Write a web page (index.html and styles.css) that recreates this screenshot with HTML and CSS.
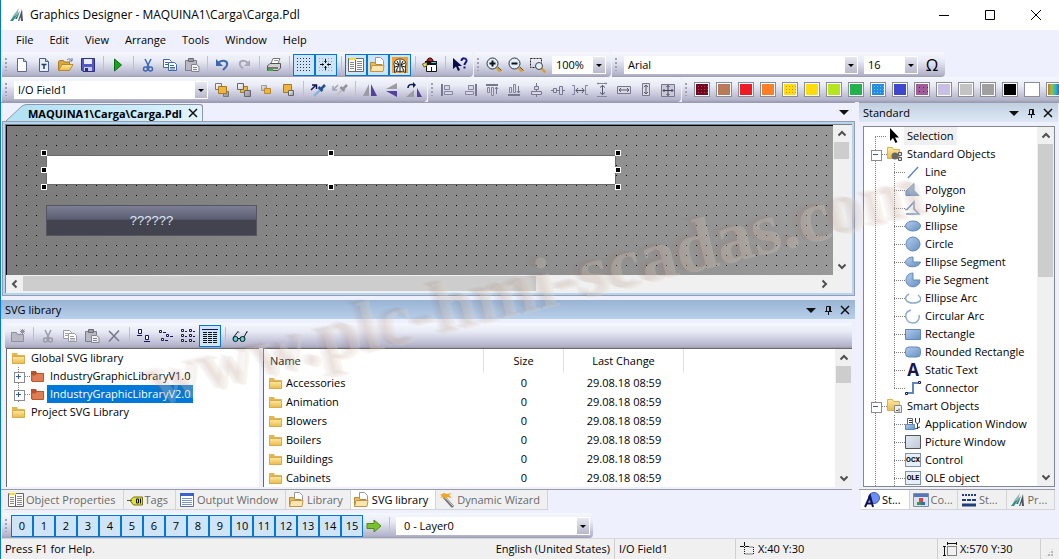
FILE: index.html
```html
<!DOCTYPE html>
<html lang="en">
<head>
	<meta charset="UTF-8">
	<title>Graphics Designer - MAQUINA1\Carga\Carga.Pdl</title>
	<link rel="stylesheet" href="styles.css">
</head>
<body>
<svg class="sprite" aria-hidden="true">
	<defs>
		<linearGradient id="g-blue" x1="0" y1="0" x2="1" y2="1"><stop offset="0" stop-color="#b4cdea"/><stop offset="1" stop-color="#6690c4"/></linearGradient>
		<linearGradient id="g-gold" x1="0" y1="0" x2="0" y2="1"><stop offset="0" stop-color="#ffe9a0"/><stop offset="1" stop-color="#e9bb4c"/></linearGradient>
		<linearGradient id="g-gray" x1="0" y1="0" x2="1" y2="1"><stop offset="0" stop-color="#fff"/><stop offset="1" stop-color="#8e8e9c"/></linearGradient>
	</defs>
	<symbol id="logo" viewBox="0 0 16 16"><path fill="#2f8f8b" d="M1 14 9 3l-1 4 3-3-7 10z"/><path fill="#8fb9b8" d="M3 10 10 1 8 8z"/><path fill="#4a5560" d="m9 14 4-12 1 12h-2l-.4-4-1.400 4z"/><path fill="#2b6f70" d="m6 12 5-8-3 8z"/></symbol>
	<symbol id="new" viewBox="0 0 16 16"><path fill="#fff" stroke="#5a6b8c" d="M3.500 1.500h6l3 3v10h-9z"/><path fill="#cdd6e6" stroke="#5a6b8c" d="M9.500 1.500v3h3"/></symbol>
	<symbol id="newtext" viewBox="0 0 16 16"><path fill="#e8eef8" stroke="#4a628c" d="M3.500 1.500h6l3 3v10h-9z"/><path fill="#b9c9e0" stroke="#4a628c" d="M9.500 1.500v3h3"/><path fill="none" stroke="#23395f" stroke-width="1.500" d="M5.500 7.500h5M8 7v5"/></symbol>
	<symbol id="open" viewBox="0 0 16 16"><path fill="#dba63a" stroke="#a87b24" d="M.5 13.500v-9l1-1h4l1 1.500h5v3"/><path fill="url(#g-gold)" stroke="#b98a2c" d="M.5 13.500 4 7.500h11l-3.500 6z"/><path fill="none" stroke="#6b7890" d="M9 3c2-2 4-1 5 1m0-3v3h-3"/></symbol>
	<symbol id="save" viewBox="0 0 16 16"><path fill="#5358c4" stroke="#2c2f80" d="M1.500 1.500h13v13H3l-1.500-1.500z"/><path fill="#e9ecfa" d="M4 2h8v5H4z"/><path fill="#c5c8e6" d="M4 10h8v4H4z"/><path fill="#2c2f80" d="M5 11h3v3H5z"/></symbol>
	<symbol id="play" viewBox="0 0 16 16"><path fill="#18a41c" stroke="#0b6b12" d="M4.500 2v12l7-6z"/></symbol>
	<symbol id="cut" viewBox="0 0 16 16"><path fill="none" stroke="currentColor" stroke-width="1.500" d="M5 2l4 8M11 2 7 10"/><circle cx="5.500" cy="12" r="2" fill="none" stroke="currentColor" stroke-width="1.500"/><circle cx="10.500" cy="12" r="2" fill="none" stroke="currentColor" stroke-width="1.500"/></symbol>
	<symbol id="copy" viewBox="0 0 16 16"><g fill="#fff" stroke="currentColor"><path d="M1.500 2.500h6l2 2v6h-8z"/><path d="M6.500 5.500h6l2 2v6h-8z"/></g><path stroke="currentColor" d="M3 5.500h3M3 7.500h3M8 8.500h4M8 10.500h5M8 12h5"/></symbol>
	<symbol id="paste" viewBox="0 0 16 16"><path fill="#b9b9c2" stroke="#7d7d88" d="M1.500 3.500h11v10h-11z"/><path fill="#9a9aa6" stroke="#6d6d78" d="M4.500 1.500h5v3h-5z"/><path fill="#f1f1f5" stroke="#85858f" d="M7.500 7.500h5l2.500 2v5H7.500z"/><path stroke="#85858f" d="M9 10.500h4M9 12.500h4"/></symbol>
	<symbol id="undo" viewBox="0 0 16 16"><path fill="none" stroke="currentColor" stroke-width="2" d="M4 6c5-4 10-2 9 2-.5 2-2 3-4 5"/><path fill="currentColor" d="M2 2v7h7z"/></symbol>
	<symbol id="redo" viewBox="0 0 16 16"><path fill="none" stroke="#a9a9b6" stroke-width="2" d="M12 6c-5-4-9-2-8 2 .5 1.500 1.500 2 3 3.500"/><path fill="#a9a9b6" d="M14 3v6H8z"/></symbol>
	<symbol id="print" viewBox="0 0 16 16"><path fill="#fff" stroke="#777" d="M5 6.500 7 1.500h7l-2 5z"/><path fill="#d2d2cc" stroke="#555" d="M1.500 9 4 6.500h10.500V11L12 13.500H1.500z"/><path fill="#777" d="M2 10h10v2H2z"/><path fill="#3fae3f" d="M2 12h5v2H2z"/><path stroke="#999" d="M8 3.500h4"/></symbol>
	<symbol id="grid" viewBox="0 0 16 16"><path stroke="#333" stroke-dasharray="1 2" d="M1 1.500h14M1 4.500h14M1 7.500h14M1 10.500h14M1 13.500h14"/></symbol>
	<symbol id="snap" viewBox="0 0 16 16"><path stroke="#9aa" stroke-dasharray="1 2" d="M1 1.500h14M1 4.500h14M1 10.500h14M1 13.500h14"/><path stroke="#111" d="M7.500 2v4M7.500 9v4M2 7.500h4M9 7.500h4"/><path fill="#111" d="M6 4h3L7.500 6zM6 11h3L7.500 9zM4 6v3l2-1.500zM11 6v3L9 7.500z"/></symbol>
	<symbol id="props" viewBox="0 0 16 16"><path fill="#fff" stroke="#666" d="M.5 1.500h15v13H.5zM7.500 1.500v13"/><path fill="#f5dc31" d="M1 1h7v2H1z"/><path stroke="#888" d="M2 5.500h4M2 7.500h4M2 9.500h4M2 11.500h4M9 4.500h5M9 6.500h5M9 8.500h5M9 10.500h5M9 12.500h5"/></symbol>
	<symbol id="lib" viewBox="0 0 16 16"><path fill="#fff" stroke="#999" d="M5.500 9V.5h5l3 3V9z"/><path fill="#e9bc60" stroke="#b88a35" d="M.5 14.500v-9h4l1.500 2h6v3"/><path fill="#ffe6ae" stroke="#c3954a" d="m.5 14.500 1.500-6h12l-1 6z"/></symbol>
	<symbol id="dyn" viewBox="0 0 16 16"><path fill="#f0a02c" d="M0 0h16v16H0z"/><path fill="#fff" stroke="#111" stroke-width=".8" d="M2.500 15.500V9C1 5 4 2 8 2s7 3 5.500 7v6.500l-3-1.500-2.500 1-2.500-1z"/><path fill="none" stroke="#111" d="M8 3v12M5 4l2 4-3 6M11 4 9 8l3 6M3 6l4 2M13 6 9 8M3 10l3-1M13 10l-3-1"/></symbol>
	<symbol id="proj" viewBox="0 0 16 16"><path fill="#fff" stroke="#111" d="M4.500 7.500h10v7h-10z"/><path fill="#111" d="M3 4h12v3H3z"/><path fill="#3ad6e8" d="M9 5h5v1H9z"/><path fill="#c31a1a" stroke="#111" d="M5 4c0-4 6-4 6 0L9 5z"/><path fill="#f2df3a" stroke="#111" stroke-width=".6" d="M.5 7 5 5v4l-3 1z"/><path stroke="#111" d="M9.500 10v4"/></symbol>
	<symbol id="whats" viewBox="0 0 16 16"><path fill="#0b0b4a" d="M1 1v11l3-2.500L6 14l2-1-2-4h4z"/><path fill="none" stroke="#17178c" stroke-width="2" d="M9.500 4c0-4 5.500-3 5 0-.3 1.500-2 2-2 4M12.500 9.500v2"/></symbol>
	<symbol id="zin" viewBox="0 0 16 16"><path stroke="#d8a030" stroke-width="3" d="m10.500 10.500 4 4"/><path stroke="#555" d="m12 10 3.500 3.500"/><circle cx="6.500" cy="6.500" r="5.500" fill="#e3eefc" stroke="#333"/><path stroke="#111" stroke-width="2" d="M3.500 6.500h6M6.500 3.500v6"/></symbol>
	<symbol id="zout" viewBox="0 0 16 16"><path stroke="#d8a030" stroke-width="3" d="m10.500 10.500 4 4"/><path stroke="#555" d="m12 10 3.500 3.500"/><circle cx="6.500" cy="6.500" r="5.500" fill="#e3eefc" stroke="#333"/><path stroke="#111" stroke-width="2" d="M3.500 6.500h6"/></symbol>
	<symbol id="zsel" viewBox="0 0 16 16"><path fill="none" stroke="#222" stroke-dasharray="2 1" d="M.5 1.500h11v9H.5z"/><path stroke="#d8a030" stroke-width="2.500" d="m11.500 11.500 4 4"/><circle cx="9" cy="9" r="3.500" fill="#e3eefc" stroke="#444"/></symbol>
	<symbol id="front" viewBox="0 0 16 16"><path fill="url(#g-gray)" stroke="#777" d="M1.500 1.500h6v6h-6zM9.500 9.500h5v5h-5z"/><path fill="#f0b53c" stroke="#a5791f" d="M4.500 4.500h8v7h-8z"/></symbol>
	<symbol id="back" viewBox="0 0 16 16"><path fill="#f0b53c" stroke="#a5791f" d="M4.500 4.500h7v6h-7z"/><path fill="url(#g-gray)" stroke="#666" d="M1.500 1.500h6v6h-6zM8.500 8.500h6v6h-6z"/></symbol>
	<symbol id="fwd" viewBox="0 0 16 16"><path fill="url(#g-gray)" stroke="#999" d="M3.500 3.500h5v5h-5z"/><path fill="#f0b53c" stroke="#b98a2c" d="M6.500 6.500h6v5h-6z"/></symbol>
	<symbol id="bwd" viewBox="0 0 16 16"><path fill="#f0b53c" stroke="#a5791f" d="M3.500 2.500h8v8h-8z"/><path fill="url(#g-gray)" stroke="#666" d="M8.500 8.500h5v5h-5z"/></symbol>
	<symbol id="pick" viewBox="0 0 16 16"><path fill="none" stroke="#15155c" stroke-width="1.500" d="M1 8l5-5M2 3h4.500v4"/><path stroke="#8fb4de" stroke-width="2.500" d="m4 14 6-6"/><path stroke="#24508c" stroke-width="2.500" d="m8.500 5 4 4M11 7l4-4"/></symbol>
	<symbol id="drop" viewBox="0 0 16 16"><path fill="none" stroke="#a4a4b0" stroke-width="1.500" d="M6 3 1 8M1 4v4h4"/><path stroke="#c2c2cb" stroke-width="2.500" d="m4 14 6-6"/><path stroke="#93939f" stroke-width="2.500" d="m8.500 5 4 4M11 7l4-4"/></symbol>
	<symbol id="fliph" viewBox="0 0 16 16"><path fill="#9b9ba4" d="M7 2v12H1z"/><path fill="#55419c" d="M9 2v12h6z"/></symbol>
	<symbol id="flipv" viewBox="0 0 16 16"><path fill="#9b9ba4" d="M13 1v6H2z"/><path fill="#55419c" d="M13 15V9H2z"/></symbol>
	<symbol id="rot" viewBox="0 0 16 16"><path fill="#9b9ba4" d="M8 8v7H0z"/><path fill="#55419c" d="M11 6v9h5z"/><path fill="none" stroke="#111a50" stroke-width="1.500" d="M2 6c0-4 4-4 7-3"/><path fill="#111a50" d="M7 0v6l3-3z"/></symbol>
	<symbol id="al" viewBox="0 0 16 16"><path stroke="#777790" stroke-width="2" d="M2 2v12"/><path fill="#d9d9e6" stroke="#8585a0" d="M4.500 3.500h5v4h-5zM4.500 9.500h8v3h-8z"/></symbol>
	<symbol id="ar" viewBox="0 0 16 16"><path stroke="#777790" stroke-width="2" d="M14 2v12"/><path fill="#d9d9e6" stroke="#8585a0" d="M6.500 3.500h5v4h-5zM3.500 9.500h8v3h-8z"/></symbol>
	<symbol id="at" viewBox="0 0 16 16"><path stroke="#777790" stroke-width="2" d="M2 3h12"/><path fill="#d9d9e6" stroke="#8585a0" d="M3.500 5.500h2v5h-2zM7.500 5.500h2v8h-2z"/><path fill="none" stroke="#777790" d="M12.500 5v7M11 7l1.500-2L14 7"/></symbol>
	<symbol id="ab" viewBox="0 0 16 16"><path stroke="#777790" stroke-width="2" d="M2 13h12"/><path fill="#d9d9e6" stroke="#8585a0" d="M3.500 5.500h2v5h-2zM7.500 2.500h2v8h-2z"/><path fill="none" stroke="#777790" d="M12.500 4v7M11 9l1.500 2L14 9"/></symbol>
	<symbol id="ch" viewBox="0 0 16 16"><path stroke="#777790" d="M8.500 1v14"/><path fill="#d9d9e6" stroke="#777790" d="M6.500 4.500h4v3h-4zM3.500 9.500h10v3h-10z"/></symbol>
	<symbol id="cv" viewBox="0 0 16 16"><path stroke="#777790" d="M1 8.500h14"/><path fill="#d9d9e6" stroke="#777790" d="M3.500 6.500h3v4h-3zM9.500 4.500h3v8h-3z"/></symbol>
	<symbol id="sh" viewBox="0 0 16 16"><path fill="none" stroke="#8585a0" d="M0 3.500h2.500v9H0M16 3.500h-2.500v9H16"/><path stroke="#555568" d="M4 8.500h8M6 6 4 8.500 6 11M10 6l2 2.500-2 2.500" fill="none"/></symbol>
	<symbol id="sv" viewBox="0 0 16 16"><path fill="none" stroke="#8585a0" d="M3 1.500h10M3 14.500h10M4 .5v2M12 .5v2"/><path stroke="#555568" d="M8.500 3.500v9M6 5.500l2.500-2 2.500 2M6 10.500l2.500 2 2.500-2" fill="none"/></symbol>
	<symbol id="sw" viewBox="0 0 16 16"><path fill="#dcdce6" stroke="#777790" d="M1.500 4.500h13v7h-13z"/><path stroke="#555568" d="M3 8h10M5 6 3 8l2 2M11 6l2 2-2 2" fill="none"/></symbol>
	<symbol id="se" viewBox="0 0 16 16"><path fill="#dcdce6" stroke="#777790" d="M4.500 1.500h7v12h-7z"/><path stroke="#555568" d="M8 3v9M6 5l2-2 2 2M6 10l2 2 2-2" fill="none"/></symbol>
	<symbol id="sb" viewBox="0 0 16 16"><path fill="#c9c9d8" stroke="#777790" d="M1.500 2.500h13v12h-13z"/><path stroke="#444458" fill="none" d="M8 3.500v10M3 8.500h10M6.500 5 8 3.500 9.500 5M6.500 12 8 13.500 9.500 12M4.500 7 3 8.500 4.500 10M11.500 7 13 8.500 11.500 10"/></symbol>
	<symbol id="folder" viewBox="0 0 16 16"><path fill="#e5b54f" d="M1 14V3h5l1 2h7v9z"/><path fill="url(#g-gold)" stroke="#d6ac50" d="M1.500 13.500v-7h12v7z"/></symbol>
	<symbol id="redfolder" viewBox="0 0 16 16"><path fill="#b9502c" d="M1 13V3h5l1 2h7v8z"/><path fill="#e07d55" stroke="#b9582f" d="M2 13.500 1.500 7h4l1-1.500h7v8z"/></symbol>
	<symbol id="addfolder" viewBox="0 0 16 16"><path fill="#b9b9c4" stroke="#90909c" d="M1.500 13.500v-9h5l1 2h6v7z"/><path stroke="#90909c" d="M12.500 1v5M10 3.500h5M10.500 1.500l4 4M14.500 1.500l-4 4"/></symbol>
	<symbol id="del" viewBox="0 0 16 16"><path stroke="#777786" stroke-width="1.500" d="m3 3 10 10M13 2.500 3 13.500"/></symbol>
	<symbol id="big" viewBox="0 0 16 16"><g fill="#fff" stroke="#16165c"><path d="M2.500 1.500h3v4h-3zM9.500 7.500h3v4h-3z"/></g><path stroke="#16165c" d="M1 7.500h5M8 13.500h6"/></symbol>
	<symbol id="small" viewBox="0 0 16 16"><path fill="#fff" stroke="#16165c" d="M1.500 2.500h2v2h-2zM3.500 10.500h2v2h-2zM8.500 6.500h2v2h-2z"/><path stroke="#16165c" d="M5 4.500h3M7 12.500h3M12 8.500h3"/></symbol>
	<symbol id="list" viewBox="0 0 16 16"><g fill="#fff" stroke="#16165c"><path d="M1.500 1.500h2v2h-2zM1.500 6.500h2v2h-2zM1.500 11.500h2v2h-2zM9.500 1.500h2v2h-2zM9.500 6.500h2v2h-2zM9.500 11.500h2v2h-2z"/></g><path stroke="#16165c" d="M5 3.500h2M5 8.500h2M5 13.500h2M13 3.500h2M13 8.500h2M13 13.500h2"/></symbol>
	<symbol id="detail" viewBox="0 0 16 16"><path stroke="#16165c" d="M0 1.500h16"/><path stroke="#111" stroke-dasharray="4 1" d="M1 4.500h15M1 6.500h15M1 8.500h15M1 10.500h15M1 12.500h15M1 14.500h15"/></symbol>
	<symbol id="glasses" viewBox="0 0 16 16"><g fill="#52d8dc" stroke="#111"><circle cx="3.500" cy="11" r="2.500"/><circle cx="10.500" cy="11" r="2.500"/></g><path fill="none" stroke="#111" d="M1 10 6 3.500l1 1M6 10.500h2M12 9l3-5.500 1 1"/></symbol>
	<symbol id="cursor" viewBox="0 0 16 16"><path fill="#000" d="M3 0v13l3-3 2.500 5 2-1L8 9.500h4z"/></symbol>
	<symbol id="stdobj" viewBox="0 0 16 16"><path fill="url(#g-gold)" stroke="#dcb050" d="M.5 12.500v-11h5l1 2h6v9z"/><circle cx="8" cy="10" r="3.500" fill="#666"/><path fill="#ddd" stroke="#555" d="M11.500 6.500h3v3h-3zM11.500 11.500h3v3h-3z"/></symbol>
	<symbol id="smart" viewBox="0 0 16 16"><path fill="url(#g-gold)" stroke="#dcb050" d="M.5 12.500v-11h5l1 2h6v9z"/><path fill="#eee" stroke="#888" d="M7.500 7.500h7v7h-7z"/><path stroke="#555" d="M9 12.500h2m1-2v3"/></symbol>
	<symbol id="line" viewBox="0 0 16 16"><path stroke="#5f88bb" stroke-width="1.500" d="M3 14 13 3"/></symbol>
	<symbol id="polygon" viewBox="0 0 16 16"><path fill="url(#g-blue)" stroke="#6d92bf" d="M1 13.500V9l8-7.500v7l5 5z"/></symbol>
	<symbol id="polyline" viewBox="0 0 16 16"><path fill="none" stroke="#7f9fc7" stroke-width="1.500" d="M0 9.500h2L9 2v7l5 5H1"/></symbol>
	<symbol id="ellipse" viewBox="0 0 16 16"><ellipse cx="8" cy="8" rx="7.500" ry="5" fill="url(#g-blue)" stroke="#5f88bb"/></symbol>
	<symbol id="circle" viewBox="0 0 16 16"><circle cx="8" cy="8" r="7" fill="url(#g-blue)" stroke="#5f88bb"/></symbol>
	<symbol id="eseg" viewBox="0 0 16 16"><path fill="url(#g-blue)" stroke="#5f88bb" d="M8 3v5h7.500C14 14.500 1 14 .5 8.500.500 5.500 4 3 8 3z"/></symbol>
	<symbol id="pie" viewBox="0 0 16 16"><path fill="url(#g-blue)" stroke="#5f88bb" d="M8 1v7h7c0 9-14 9-14 0 0-4 3-7 7-7z"/></symbol>
	<symbol id="earc" viewBox="0 0 16 16"><path fill="none" stroke="#8eabd0" stroke-width="1.500" d="M4 4C-3 8 2 13 8 13s11-3 5-8"/></symbol>
	<symbol id="carc" viewBox="0 0 16 16"><path fill="none" stroke="#8eabd0" stroke-width="1.500" d="M6 2C-3 5 1 15 8 15c5 0 7-5 6-8"/></symbol>
	<symbol id="rect" viewBox="0 0 16 16"><path fill="url(#g-blue)" stroke="#5f88bb" d="M.5 3.500h15v10H.500z"/></symbol>
	<symbol id="rrect" viewBox="0 0 16 16"><rect x=".5" y="3" width="15" height="10" rx="3.500" fill="url(#g-blue)" stroke="#5f88bb"/></symbol>
	<symbol id="conn" viewBox="0 0 16 16"><path fill="none" stroke="#5f88bb" stroke-width="2" d="M2 13h6V3h5"/><path fill="#fff" stroke="#16165c" d="M.5 12.500h2v2h-2zM13.500 1.500h2v2h-2z"/></symbol>
	<symbol id="appwin" viewBox="0 0 16 16"><path fill="#fff" stroke="#667" d="M2.500 2.500h5v6h-5z"/><path fill="url(#g-blue)" stroke="#5f88bb" d="M.5 8.500h9v5h-9z"/><path stroke="#333" fill="none" d="M4 4.500h3M4 6.500h3M10.500 2v4l2 2v5M14.500 2v4l-2 2M10 13l5-2"/></symbol>
	<symbol id="picwin" viewBox="0 0 16 16"><path fill="url(#g-gray)" d="M1 2h14v12H1z"/><path fill="#d6e2f0" fill-opacity=".7" stroke="#555" d="M.5 1.500h15v13H.5z"/></symbol>
	<symbol id="tag" viewBox="0 0 16 16"><path fill="#e3e32b" stroke="#72721c" d="M3 8.500 6.500 5h9v8h-9z"/><path stroke="#555" d="M0 8.500h5"/><path stroke="#111" d="M9.500 7v4h2V7zM13.500 6.500v5" fill="none"/></symbol>
	<symbol id="out" viewBox="0 0 16 16"><path fill="#fff" stroke="#5c6f9c" d="M1.500 1.500h13v13h-13z"/><path fill="#3b62c8" d="M1 1h14v3H1z"/><path stroke="#7f93bf" d="M3 6.500h10M3 8.500h10M3 10.500h10M3 12.500h10"/></symbol>
	<symbol id="wand" viewBox="0 0 16 16"><path stroke="#777" stroke-width="3" d="m5 5 9 10"/><path stroke="#ddd" d="m6 5 8 9"/><path fill="#f1a629" d="m1 3 4-2 3 1 5-1-3 2 3 3-5-1-2 3-1-3-4 1 2-2z"/></symbol>
	<symbol id="stdtab" viewBox="0 0 16 16"><circle cx="10" cy="6" r="5.500" fill="#6a8ff0" stroke="#3c5cc8"/><path fill="none" stroke="#111158" stroke-width="2" d="m1 15 5-11 3 11M3 11.500h6"/></symbol>
	<symbol id="ctl" viewBox="0 0 16 16"><path fill="#d9e3f3" stroke="#7b8db0" d="M.5 1.500h15v13H.5z"/><path fill="#5576b8" d="M1 2h14v3H1z"/><path fill="#d44" d="M6 6h4v4H6z"/><path fill="#3a9a4a" d="M4 10h4v3H4z"/><path fill="#36c" d="M8 10h4v3H8z"/></symbol>
	<symbol id="styl" viewBox="0 0 16 16"><path stroke="#1f3f7c" stroke-width="2" stroke-dasharray="2 1" d="M1 3h14"/><path stroke="#1f3f7c" stroke-width="2" stroke-dasharray="4 1" d="M1 8h14"/><path stroke="#1f3f7c" stroke-width="3" d="M1 13h14"/></symbol>
	<symbol id="go" viewBox="0 0 16 16"><path fill="#7ac12c" stroke="#4f8a1b" d="M1 5.500h7V2l7 6-7 6v-3.500H1z"/></symbol>
	<symbol id="pos" viewBox="0 0 16 16"><path stroke="#111" d="M4.500 1v4M0 5.500h4M5 5.500h4"/><path fill="none" stroke="#111" stroke-dasharray="1 1" d="M4.500 6v7h9v-7H9"/></symbol>
	<symbol id="dim" viewBox="0 0 16 16"><path stroke="#111" fill="none" d="M5 2.500h10M5.500 1v3M14.500 1v3M2.500 6v9M1 5.500h3M1 14.500h3"/><path fill="none" stroke="#111" stroke-dasharray="1 1" d="M5.500 5.500h9v9h-9z"/></symbol>
	<symbol id="down" viewBox="0 0 12 12"><path fill="#111" d="M1 4h10L6 9z"/></symbol>
	<symbol id="pin" viewBox="0 0 12 12"><path fill="none" stroke="#111" d="M4.500 7V2.500h4V7M7.500 3v4M3 7.500h7M6.500 8v3"/></symbol>
	<symbol id="x" viewBox="0 0 12 12"><path fill="none" stroke="#111" stroke-width="1.500" d="m2 2 8 8M10 2l-8 8"/></symbol>
	<symbol id="chev" viewBox="0 0 10 10"><path fill="none" stroke="#505050" stroke-width="2" d="m1.500 7 3.500-3.500L8.500 7"/></symbol>
</svg>

<div class="app">
	<header class="titlebar">
		<svg class="ico"><use href="#logo"/></svg>
		<h1>Graphics Designer - MAQUINA1\Carga\Carga.Pdl</h1>
		<button aria-label="Minimize"><svg viewBox="0 0 12 12"><path stroke="#000" d="M1 6.500h10"/></svg></button>
		<button aria-label="Maximize"><svg viewBox="0 0 12 12"><path fill="none" stroke="#000" d="M1.500 1.500h9v9h-9z"/></svg></button>
		<button aria-label="Close"><svg viewBox="0 0 12 12"><path stroke="#000" d="m1 1 10 10M11 1 1 11"/></svg></button>
	</header>

	<nav class="menubar">
		<button>File</button>
		<button>Edit</button>
		<button>View</button>
		<button>Arrange</button>
		<button>Tools</button>
		<button>Window</button>
		<button>Help</button>
	</nav>

	<div class="bars">
		<div class="toolbar">
			<i class="grip"></i>
			<button class="tb" aria-label="New"><svg class="ico"><use href="#new"/></svg></button>
			<button class="tb" aria-label="New from template"><svg class="ico"><use href="#newtext"/></svg></button>
			<button class="tb" aria-label="Open"><svg class="ico"><use href="#open"/></svg></button>
			<button class="tb" aria-label="Save"><svg class="ico"><use href="#save"/></svg></button>
			<i class="sep"></i>
			<button class="tb" aria-label="Runtime"><svg class="ico"><use href="#play"/></svg></button>
			<i class="sep"></i>
			<button class="tb blue" aria-label="Cut"><svg class="ico"><use href="#cut"/></svg></button>
			<button class="tb blue" aria-label="Copy"><svg class="ico"><use href="#copy"/></svg></button>
			<button class="tb" aria-label="Paste"><svg class="ico"><use href="#paste"/></svg></button>
			<i class="sep"></i>
			<button class="tb blue" aria-label="Undo"><svg class="ico"><use href="#undo"/></svg></button>
			<button class="tb" aria-label="Redo"><svg class="ico"><use href="#redo"/></svg></button>
			<i class="sep"></i>
			<button class="tb" aria-label="Print"><svg class="ico"><use href="#print"/></svg></button>
			<i class="sep"></i>
			<button class="tb on" aria-label="Grid"><svg class="ico"><use href="#grid"/></svg></button>
			<button class="tb on" aria-label="Snap to grid"><svg class="ico"><use href="#snap"/></svg></button>
			<i class="sep"></i>
			<button class="tb on" aria-label="Properties"><svg class="ico"><use href="#props"/></svg></button>
			<button class="tb on" aria-label="Library"><svg class="ico"><use href="#lib"/></svg></button>
			<button class="tb on" aria-label="Dynamic wizard"><svg class="ico"><use href="#dyn"/></svg></button>
			<i class="sep"></i>
			<button class="tb" aria-label="Project"><svg class="ico"><use href="#proj"/></svg></button>
			<i class="sep"></i>
			<button class="tb" aria-label="Context help"><svg class="ico"><use href="#whats"/></svg></button>
		</div>
		<div class="toolbar">
			<i class="grip"></i>
			<button class="tb" aria-label="Zoom in"><svg class="ico"><use href="#zin"/></svg></button>
			<button class="tb" aria-label="Zoom out"><svg class="ico"><use href="#zout"/></svg></button>
			<button class="tb" aria-label="Zoom area"><svg class="ico"><use href="#zsel"/></svg></button>
			<span class="combo zoom"><select aria-label="Zoom"><option>100%</option></select></span>
		</div>
		<div class="toolbar">
			<i class="grip"></i>
			<span class="combo font"><select aria-label="Font"><option>Arial</option></select></span>
			<span class="combo size"><select aria-label="Font size"><option>16</option></select></span>
			<button class="tb omega" aria-label="Symbols">Ω</button>
		</div>
	</div>
	<div class="bars">
		<div class="toolbar">
			<i class="grip"></i>
			<span class="combo object"><select aria-label="Object"><option>I/O Field1</option></select></span>
			<button class="tb" aria-label="Bring to front"><svg class="ico"><use href="#front"/></svg></button>
			<button class="tb" aria-label="Send to back"><svg class="ico"><use href="#back"/></svg></button>
			<button class="tb" aria-label="Forward"><svg class="ico"><use href="#fwd"/></svg></button>
			<button class="tb" aria-label="Backward"><svg class="ico"><use href="#bwd"/></svg></button>
			<i class="sep"></i>
			<button class="tb" aria-label="Copy properties"><svg class="ico"><use href="#pick"/></svg></button>
			<button class="tb" aria-label="Assign properties"><svg class="ico"><use href="#drop"/></svg></button>
			<i class="sep"></i>
			<button class="tb" aria-label="Flip horizontal"><svg class="ico"><use href="#fliph"/></svg></button>
			<button class="tb" aria-label="Flip vertical"><svg class="ico"><use href="#flipv"/></svg></button>
			<button class="tb" aria-label="Rotate"><svg class="ico"><use href="#rot"/></svg></button>
		</div>
		<div class="toolbar">
			<i class="grip"></i>
			<button class="tb" aria-label="Align left"><svg class="ico"><use href="#al"/></svg></button>
			<button class="tb" aria-label="Align right"><svg class="ico"><use href="#ar"/></svg></button>
			<button class="tb" aria-label="Align top"><svg class="ico"><use href="#at"/></svg></button>
			<button class="tb" aria-label="Align bottom"><svg class="ico"><use href="#ab"/></svg></button>
			<button class="tb" aria-label="Center horizontally"><svg class="ico"><use href="#ch"/></svg></button>
			<button class="tb" aria-label="Center vertically"><svg class="ico"><use href="#cv"/></svg></button>
			<button class="tb" aria-label="Space horizontally"><svg class="ico"><use href="#sh"/></svg></button>
			<button class="tb" aria-label="Space vertically"><svg class="ico"><use href="#sv"/></svg></button>
			<button class="tb" aria-label="Same width"><svg class="ico"><use href="#sw"/></svg></button>
			<button class="tb" aria-label="Same height"><svg class="ico"><use href="#se"/></svg></button>
			<button class="tb" aria-label="Same size"><svg class="ico"><use href="#sb"/></svg></button>
		</div>
		<div class="toolbar palette">
			<i class="grip"></i>
			<button class="tb" aria-label="Dark red"><i class="chip darkred"></i></button>
			<button class="tb" aria-label="Brown"><i class="chip brown"></i></button>
			<button class="tb" aria-label="Red"><i class="chip red"></i></button>
			<button class="tb" aria-label="Orange"><i class="chip orange"></i></button>
			<button class="tb" aria-label="Gold"><i class="chip gold"></i></button>
			<button class="tb" aria-label="Yellow"><i class="chip yellow"></i></button>
			<button class="tb" aria-label="Lime"><i class="chip lime"></i></button>
			<button class="tb" aria-label="Green"><i class="chip green"></i></button>
			<button class="tb" aria-label="Turquoise"><i class="chip turquoise"></i></button>
			<button class="tb" aria-label="Indigo"><i class="chip indigo"></i></button>
			<button class="tb" aria-label="Purple"><i class="chip purple"></i></button>
			<button class="tb" aria-label="Lavender"><i class="chip lavender"></i></button>
			<button class="tb" aria-label="Light gray"><i class="chip lightgray"></i></button>
			<button class="tb" aria-label="Gray"><i class="chip gray"></i></button>
			<button class="tb" aria-label="Black"><i class="chip black"></i></button>
			<button class="tb" aria-label="White"><i class="chip white"></i></button>
			<button class="tb" aria-label="More colors"><i class="chip rainbow"></i></button>
		</div>
	</div>

	<main class="work">
		<div class="left">
			<div class="doctabs">
				<svg class="slope" viewBox="0 0 22 17"><path fill="#b4e2f5" d="M0 17 16 2q2-2 6-2v17z"/><path fill="none" stroke="#8a97a8" d="M0 17 16 2q2-1.500 6-1.500"/></svg>
				<div class="doctab">MAQUINA1\Carga\Carga.Pdl <button aria-label="Close tab"><svg class="mini"><use href="#x"/></svg></button></div>
				<button class="tabmenu" aria-label="Tab list"><svg class="mini"><use href="#down"/></svg></button>
			</div>
			<div class="docframe">
				<div class="docinner">
					<div class="canvas">
						<div class="field"><i></i><i></i><i></i><i></i><i></i><i></i><i></i><i></i></div>
						<button class="pushbtn">??????</button>
					</div>
					<div class="scroll vert"><svg><use href="#chev"/></svg><i class="thumb"></i><svg class="flip"><use href="#chev"/></svg></div>
					<div class="scroll horz"><svg class="toleft"><use href="#chev"/></svg><i class="thumb"></i><svg class="toright"><use href="#chev"/></svg></div>
				</div>
			</div>

			<section class="library">
				<div class="panelhead dark">
					<h2>SVG library</h2>
					<button aria-label="Menu"><svg class="mini"><use href="#down"/></svg></button>
					<button aria-label="Pin"><svg class="mini"><use href="#pin"/></svg></button>
					<button aria-label="Close"><svg class="mini"><use href="#x"/></svg></button>
				</div>
				<div class="toolbar libbar">
					<button class="tb" aria-label="New folder"><svg class="ico"><use href="#addfolder"/></svg></button>
					<i class="sep"></i>
					<button class="tb dim" aria-label="Cut"><svg class="ico"><use href="#cut"/></svg></button>
					<button class="tb dim" aria-label="Copy"><svg class="ico"><use href="#copy"/></svg></button>
					<button class="tb" aria-label="Paste"><svg class="ico"><use href="#paste"/></svg></button>
					<button class="tb" aria-label="Delete"><svg class="ico"><use href="#del"/></svg></button>
					<i class="sep"></i>
					<button class="tb" aria-label="Large icons"><svg class="ico"><use href="#big"/></svg></button>
					<button class="tb" aria-label="Small icons"><svg class="ico"><use href="#small"/></svg></button>
					<button class="tb" aria-label="List"><svg class="ico"><use href="#list"/></svg></button>
					<button class="tb on" aria-label="Details"><svg class="ico"><use href="#detail"/></svg></button>
					<i class="sep"></i>
					<button class="tb" aria-label="Preview"><svg class="ico"><use href="#glasses"/></svg></button>
				</div>
				<div class="libbody">
					<ul class="tree libtree">
						<li><svg class="ico"><use href="#folder"/></svg><span>Global SVG library</span></li>
						<li><i class="g1 plus"></i><svg class="ico"><use href="#redfolder"/></svg><span>IndustryGraphicLibraryV1.0</span></li>
						<li><i class="g1 plus"></i><svg class="ico"><use href="#redfolder"/></svg><span class="sel">IndustryGraphicLibraryV2.0</span></li>
						<li><svg class="ico"><use href="#folder"/></svg><span>Project SVG Library</span></li>
					</ul>
					<div class="listwrap">
						<table>
							<thead><tr><th class="c-name">Name</th><th class="c-size">Size</th><th class="c-date">Last Change</th><th></th></tr></thead>
							<tbody>
								<tr><td><svg class="ico"><use href="#folder"/></svg>Accessories</td><td>0</td><td>29.08.18 08:59</td><td></td></tr>
								<tr><td><svg class="ico"><use href="#folder"/></svg>Animation</td><td>0</td><td>29.08.18 08:59</td><td></td></tr>
								<tr><td><svg class="ico"><use href="#folder"/></svg>Blowers</td><td>0</td><td>29.08.18 08:59</td><td></td></tr>
								<tr><td><svg class="ico"><use href="#folder"/></svg>Boilers</td><td>0</td><td>29.08.18 08:59</td><td></td></tr>
								<tr><td><svg class="ico"><use href="#folder"/></svg>Buildings</td><td>0</td><td>29.08.18 08:59</td><td></td></tr>
								<tr><td><svg class="ico"><use href="#folder"/></svg>Cabinets</td><td>0</td><td>29.08.18 08:59</td><td></td></tr>
							</tbody>
						</table>
						<div class="scroll vert"><svg><use href="#chev"/></svg><i class="thumb"></i><svg class="flip"><use href="#chev"/></svg></div>
					</div>
				</div>
			</section>
			<div class="tabs">
				<button><svg class="ico"><use href="#props"/></svg>Object Properties</button>
				<button><svg class="ico"><use href="#tag"/></svg>Tags</button>
				<button><svg class="ico"><use href="#out"/></svg>Output Window</button>
				<button><svg class="ico"><use href="#lib"/></svg>Library</button>
				<button class="active"><svg class="ico"><use href="#lib"/></svg>SVG library</button>
				<button><svg class="ico"><use href="#wand"/></svg>Dynamic Wizard</button>
			</div>
		</div>

		<aside class="right">
			<div class="panelhead">
				<h2>Standard</h2>
				<button aria-label="Menu"><svg class="mini"><use href="#down"/></svg></button>
				<button aria-label="Pin"><svg class="mini"><use href="#pin"/></svg></button>
				<button aria-label="Close"><svg class="mini"><use href="#x"/></svg></button>
			</div>
			<div class="treewrap">
				<ul class="tree">
					<li><i class="g1 first"></i><svg class="ico"><use href="#cursor"/></svg><span class="hover">Selection</span></li>
					<li><i class="g1 minus"></i><svg class="ico"><use href="#stdobj"/></svg><span>Standard Objects</span></li>
					<li><i class="g1"></i><i class="g2"></i><svg class="ico"><use href="#line"/></svg><span>Line</span></li>
					<li><i class="g1"></i><i class="g2"></i><svg class="ico"><use href="#polygon"/></svg><span>Polygon</span></li>
					<li><i class="g1"></i><i class="g2"></i><svg class="ico"><use href="#polyline"/></svg><span>Polyline</span></li>
					<li><i class="g1"></i><i class="g2"></i><svg class="ico"><use href="#ellipse"/></svg><span>Ellipse</span></li>
					<li><i class="g1"></i><i class="g2"></i><svg class="ico"><use href="#circle"/></svg><span>Circle</span></li>
					<li><i class="g1"></i><i class="g2"></i><svg class="ico"><use href="#eseg"/></svg><span>Ellipse Segment</span></li>
					<li><i class="g1"></i><i class="g2"></i><svg class="ico"><use href="#pie"/></svg><span>Pie Segment</span></li>
					<li><i class="g1"></i><i class="g2"></i><svg class="ico"><use href="#earc"/></svg><span>Ellipse Arc</span></li>
					<li><i class="g1"></i><i class="g2"></i><svg class="ico"><use href="#carc"/></svg><span>Circular Arc</span></li>
					<li><i class="g1"></i><i class="g2"></i><svg class="ico"><use href="#rect"/></svg><span>Rectangle</span></li>
					<li><i class="g1"></i><i class="g2"></i><svg class="ico"><use href="#rrect"/></svg><span>Rounded Rectangle</span></li>
					<li><i class="g1"></i><i class="g2"></i><b class="ico letter">A</b><span>Static Text</span></li>
					<li><i class="g1"></i><i class="g2 last"></i><svg class="ico"><use href="#conn"/></svg><span>Connector</span></li>
					<li><i class="g1 minus"></i><svg class="ico"><use href="#smart"/></svg><span>Smart Objects</span></li>
					<li><i class="g1"></i><i class="g2"></i><svg class="ico"><use href="#appwin"/></svg><span>Application Window</span></li>
					<li><i class="g1"></i><i class="g2"></i><svg class="ico"><use href="#picwin"/></svg><span>Picture Window</span></li>
					<li><i class="g1"></i><i class="g2"></i><b class="ico box">OCX</b><span>Control</span></li>
					<li><i class="g1"></i><i class="g2"></i><b class="ico box">OLE</b><span>OLE object</span></li>
				</ul>
				<div class="scroll vert long"><svg><use href="#chev"/></svg><i class="thumb"></i><svg class="flip"><use href="#chev"/></svg></div>
			</div>
			<div class="tabs side">
				<button class="active"><svg class="ico"><use href="#stdtab"/></svg>St...</button>
				<button><svg class="ico"><use href="#ctl"/></svg>Co...</button>
				<button><svg class="ico"><use href="#styl"/></svg>St...</button>
				<button><svg class="ico"><use href="#logo"/></svg>Pr...</button>
			</div>
		</aside>
	</main>

	<div class="bars">
		<div class="toolbar layers">
			<i class="grip"></i>
			<button class="tb on">0</button><button class="tb on">1</button><button class="tb on">2</button><button class="tb on">3</button>
			<button class="tb on">4</button><button class="tb on">5</button><button class="tb on">6</button><button class="tb on">7</button>
			<button class="tb on">8</button><button class="tb on">9</button><button class="tb on">10</button><button class="tb on">11</button>
			<button class="tb on">12</button><button class="tb on">13</button><button class="tb on">14</button><button class="tb on">15</button>
			<button class="tb" aria-label="Next layers"><svg class="ico"><use href="#go"/></svg></button>
			<i class="sep"></i>
			<span class="combo layer"><select aria-label="Layer"><option>0 - Layer0</option></select></span>
		</div>
	</div>

	<footer class="status">
		<span class="msg">Press F1 for Help.</span>
		<span class="lang">English (United States)</span>
		<span class="s-obj">I/O Field1</span>
		<span class="s-pos"><svg class="ico"><use href="#pos"/></svg>X:40 Y:30</span>
		<span class="s-dim"><svg class="ico"><use href="#dim"/></svg>X:570 Y:30</span>
		<span class="s-grip"><i></i></span>
	</footer>
	<div class="watermark" aria-hidden="true">www.plc-hmi-scadas.com</div>
</div>
</body>
</html>
```
FILE: styles.css
```css
*{box-sizing:border-box;}
body{margin:0;font:11px/18px "Open Sans","Noto Sans",sans-serif;color:#000;}
ul{list-style:none;margin:0;padding:0;}
h1,h2{font-size:11px;font-weight:normal;margin:0;}
button,select{font:inherit;color:inherit;border:0;margin:0;padding:0;background:none;}
i,b{font-style:normal;display:block;}
svg{display:block;flex:none;}
.sprite{position:absolute;width:0;height:0;}
.ico{width:16px;height:16px;flex:none;}
.mini{width:12px;height:12px;}
.app{position:relative;height:100vh;min-height:440px;display:flex;flex-direction:column;overflow:hidden;background:#eef1fd;border-left:1px solid #0078d7;}

/* title and menu */
.titlebar{flex:none;height:30px;background:#fff;display:flex;align-items:center;padding-left:8px;}
.titlebar h1{flex:1;padding-left:5px;font-size:12px;}
.titlebar button{width:46px;height:30px;display:flex;align-items:center;justify-content:center;}
.titlebar button svg{width:12px;height:12px;}
.menubar{flex:none;height:22px;display:flex;gap:16px;padding-left:15px;}
.menubar button{height:20px;}

/* toolbars */
.bars{flex:none;display:flex;gap:1px;padding-left:1px;}
.toolbar{flex:none;height:25px;display:flex;align-items:center;padding-right:2px;border-radius:0 4px 4px 0;background:linear-gradient(#f6f8fe,#e8eaf5 35%,#b2b2ca 92%,#9c9cb0);}
.grip{width:9px;height:13px;flex:none;background:conic-gradient(from 0deg at 2px 2px,transparent 75%,#a0a0ae 0) 3px 0/8px 4px;}
.sep{width:8px;height:17px;flex:none;background:linear-gradient(#c0c0cc,#c0c0cc) 4px 0/1px 100% no-repeat;}
.tb{width:22px;height:22px;flex:none;display:flex;align-items:center;justify-content:center;}
.tb.on{background:#cfe4f6;border:1px solid #0078d7;}
.tb.blue{color:#3d68b0;}
.tb.dim{color:#9a9aa8;}
.omega{font-size:16px;}
.combo{position:relative;height:18px;background:#fff;margin:0 3px;}
.combo select{appearance:none;width:100%;height:18px;line-height:18px;padding:0 20px 0 4px;outline:0;}
.combo:before{content:'';position:absolute;right:1px;top:1px;width:12px;height:16px;background:linear-gradient(#e8e8f2,#b8b8cc);pointer-events:none;}
.combo:after{content:'';position:absolute;right:4px;top:8px;border:3px solid transparent;border-top-color:#000;border-bottom:0;pointer-events:none;}
.combo.zoom,.combo.size{width:54px;}
.combo.font{width:234px;}
.combo.object,.combo.layer{width:194px;}
.combo.layer select{padding-left:8px;}
.palette{flex:1;min-width:0;overflow:hidden;padding-right:0;border-radius:0;}
.chip{width:16px;height:15px;border:1px solid #8c8c94;box-shadow:inset 0 0 0 1px #fff;}
.darkred{background:conic-gradient(from 0deg at 1px 1px,transparent 75%,#f02030 0) 0 0/3px 3px #6c0a22;}
.brown{background:#b97a57;}
.red{background:#ed1c24;}
.orange{background:#ff7f27;}
.gold{background:conic-gradient(from 0deg at 1px 1px,transparent 75%,#e08a1c 0) 0 0/3px 3px #ffdc10;}
.yellow{background:#ffdc0c;}
.lime{background:#b5e61d;}
.green{background:#22b14c;}
.turquoise{background:conic-gradient(from 0deg at 1px 1px,transparent 75%,#40e0e8 0) 0 0/3px 3px #2a8ae0;}
.indigo{background:#3f48cc;}
.purple{background:conic-gradient(from 0deg at 1px 1px,transparent 75%,#5c2070 0) 0 0/4px 4px #a05c98;}
.lavender{background:#c8bfe7;}
.lightgray{background:#c3c3c3;}
.gray{background:#a0a0a0;}
.black{background:#000;}
.white{background:#fff;}
.rainbow{background:linear-gradient(90deg,#e2582c,#8ec63f,#1cb0c8,#5a2fd0);}

/* working area */
.work{flex:1;min-height:0;display:grid;grid-template-columns:minmax(0,1fr) 200px;gap:4px;}
.left,.right{min-height:0;display:flex;flex-direction:column;}
.doctabs{flex:none;height:19px;display:flex;align-items:flex-end;border-top:1px solid #9c9cb0;padding-left:5px;}
.slope{width:22px;height:17px;}
.doctab{height:17px;line-height:17px;display:flex;gap:5px;align-items:center;font-weight:bold;padding-right:3px;border:1px solid #8a97a8;border-width:1px 1px 0 0;border-radius:0 3px 0 0;background:linear-gradient(90deg,#b4e2f5,#d4f0fb 80%,#e4f4fc);}
.tabmenu{margin:0 5px 3px auto;}
.docframe{flex:1;min-height:0;margin-left:1px;border:1px solid #9c9ca4;padding:2px;background:#b2d5f4;}
.docinner{height:100%;border:1px solid #808080;border-width:1px 0 0 1px;padding:0 2px 1px 0;background:#f0f0f0;display:grid;grid-template:minmax(0,1fr) 17px/minmax(0,1fr) 17px;}
.canvas{position:relative;overflow:hidden;border:1px solid #000;border-width:1px 0 0 1px;background:conic-gradient(from 0deg at 1px 1px,transparent 75%,#000 0) 9px 9px/10px 10px,linear-gradient(100deg,#7c7c7c,#999);}
.field{position:absolute;left:39px;top:29px;width:570px;height:30px;border:1px solid #6a6a6a;background:#fff;}
.field i{position:absolute;width:6px;height:6px;background:#000;border:1px solid #fff;left:-6px;top:-6px;}
.field i:nth-child(2),.field i:nth-child(7){left:281px;}
.field i:nth-child(3),.field i:nth-child(5),.field i:nth-child(8){left:568px;}
.field i:nth-child(4),.field i:nth-child(5){top:11px;}
.field i:nth-child(n+6){top:28px;}
.pushbtn{position:absolute;left:39px;top:79px;width:211px;height:31px;border:1px solid #55555f;background:linear-gradient(#7d7f96,#5c5e72 45%,#43434f 50%,#43434f);color:#dbe6f2;font:13px "Liberation Sans",sans-serif;}
.scroll{display:flex;align-items:center;background:#f0f0f0;}
.scroll svg{width:10px;height:17px;}
.scroll .thumb{background:#cdcdcd;}
.vert{flex-direction:column;width:17px;flex:none;}
.vert .thumb{width:15px;height:17px;}
.vert.long .thumb{height:37%;}
.vert svg:last-child{margin-top:auto;}
.horz .thumb{height:15px;flex:0 1 62%;}
.horz svg{width:17px;height:10px;}
.horz svg:last-child{margin-left:auto;}
.flip{transform:rotate(180deg);}
.toleft{transform:rotate(-90deg);}
.toright{transform:rotate(90deg);}

/* panels */
.panelhead{flex:none;height:19px;display:flex;align-items:center;gap:5px;padding:0 4px;background:linear-gradient(#c0cfdf,#dde8f5);}
.panelhead h2{flex:1;}
.panelhead.dark{background:linear-gradient(#98b4d4,#b8cfe9);}
.library{flex:none;margin-top:4px;}
.libbar{margin:4px 3px 0 4px;padding-left:2px;border-radius:0;}
.libbody{display:flex;gap:4px;height:139px;margin:0 3px 0 5px;}
.tree{overflow:hidden;background:#fff;}
.tree li{display:flex;align-items:center;height:18px;}
.tree span{margin-left:1px;padding:0 3px;white-space:nowrap;}
.tree .sel{background:#0078d7;color:#fff;}
.tree .hover{background:#f0f0f0;}
.g1,.g2{flex:none;width:23px;height:18px;position:relative;background:repeating-linear-gradient(#808080 0 1px,transparent 1px 2px) 11px 0/1px 100% no-repeat;}
.g2{width:18px;background:repeating-linear-gradient(#808080 0 1px,transparent 1px 2px) 7px 0/1px 100% no-repeat,repeating-linear-gradient(90deg,#808080 0 1px,transparent 1px 2px) 7px 9px/11px 1px no-repeat;}
.g2.last{background-size:1px 9px,11px 1px;}
.g1.first{background:repeating-linear-gradient(#808080 0 1px,transparent 1px 2px) 11px 10px/1px 8px no-repeat,repeating-linear-gradient(90deg,#808080 0 1px,transparent 1px 2px) 11px 9px/11px 1px no-repeat;}
.plus,.minus{background:repeating-linear-gradient(#808080 0 1px,transparent 1px 2px) 11px 0/1px 100% no-repeat,repeating-linear-gradient(90deg,#808080 0 1px,transparent 1px 2px) 16px 9px/7px 1px no-repeat;}
.plus:before,.minus:before{content:'';position:absolute;left:7px;top:5px;width:9px;height:9px;border:1px solid #8c8c8c;background:linear-gradient(#2f5fa8,#2f5fa8) 1px 3px/5px 1px no-repeat #fff;}
.plus:before{background:linear-gradient(#2f5fa8,#2f5fa8) 1px 3px/5px 1px no-repeat,linear-gradient(#2f5fa8,#2f5fa8) 3px 1px/1px 5px no-repeat #fff;}
.libtree{width:253px;flex:none;border:1px solid #696969;border-width:1px 0 0 1px;padding-left:4px;}
.libtree .g1{margin-left:-4px;}
.listwrap{flex:1;min-width:0;display:flex;overflow:hidden;border:1px solid #696969;border-width:1px 0 0 1px;background:#fff;}
table{flex:1;width:100%;height:0;border-collapse:separate;border-spacing:0;table-layout:fixed;}
th{font-weight:normal;height:24px;padding:0;border-right:1px solid #e2e2e2;}
th:last-child{border:0;}
.c-name{width:220px;text-align:left;padding-left:6px;}
.c-size{width:80px;}
.c-date{width:120px;}
td{height:19px;padding:0;text-align:center;white-space:nowrap;}
td:first-child{text-align:left;padding-left:4px;}
td .ico{display:inline-block;vertical-align:top;margin:1px 2px 0 0;}
.tabs{flex:none;display:flex;height:21px;margin:2px 3px 3px 0;padding-left:4px;border-top:1px solid #9c9ca4;}
.tabs button{display:flex;align-items:center;gap:2px;height:20px;padding:0 7px 0 3px;color:#6a6a6a;background:#f0f0f0;border:1px solid #d4d4d8;border-width:0 1px 1px 0;white-space:nowrap;}
.tabs .active{color:#000;background:#fff;}

.right{padding-right:1px;border-top:1px solid #9c9cb0;}
.treewrap{flex:1;min-height:0;display:flex;margin:4px 3px 0 4px;border:1px solid #828790;background:#fff;}
.treewrap .tree{flex:1;}
.letter{font:bold 17px/16px "Open Sans",sans-serif;color:#15154f;text-align:center;}
.box{font:bold 7px/12px Roboto,sans-serif;height:14px;border:1px solid #7f93ad;background:#e6eef8;display:flex;justify-content:center;}
.side{padding-left:2px;}
.side button{flex:1;min-width:0;}

/* layers and status */
.layers{padding-right:0;}
.status{flex:none;height:21px;display:flex;align-items:center;background:#f0f0f0;border-top:1px solid #d8d8dc;}
.status span{display:flex;align-items:center;gap:2px;height:20px;padding:0 4px;white-space:nowrap;}
.status .msg{flex:1;}
.status .s-obj,.status .s-pos,.status .s-dim,.status .s-grip{border-left:1px solid #d0d0d0;}
.status .s-obj{width:121px;}
.status .s-pos{width:202px;}
.status .s-dim{width:103px;}
.status .s-grip{width:19px;align-items:flex-end;}
.s-grip i{width:9px;height:9px;margin-bottom:2px;background:conic-gradient(from 0deg at 2px 2px,transparent 75%,#b8b8b8 0) 0 0/3px 3px;clip-path:polygon(100% 0,100% 100%,0 100%);}

.watermark{position:absolute;left:156px;top:344px;font:bold 74px/75px "Liberation Serif",serif;white-space:nowrap;color:rgba(228,214,198,.24);text-shadow:-2px -1px 0 rgba(160,120,110,.04),-4px -2px 0 rgba(150,110,100,.04),-6px -3px 0 rgba(150,110,100,.04),-8px -4px 0 rgba(150,110,100,.05);transform:rotate(-14deg);transform-origin:0 63px;pointer-events:none;}
```
